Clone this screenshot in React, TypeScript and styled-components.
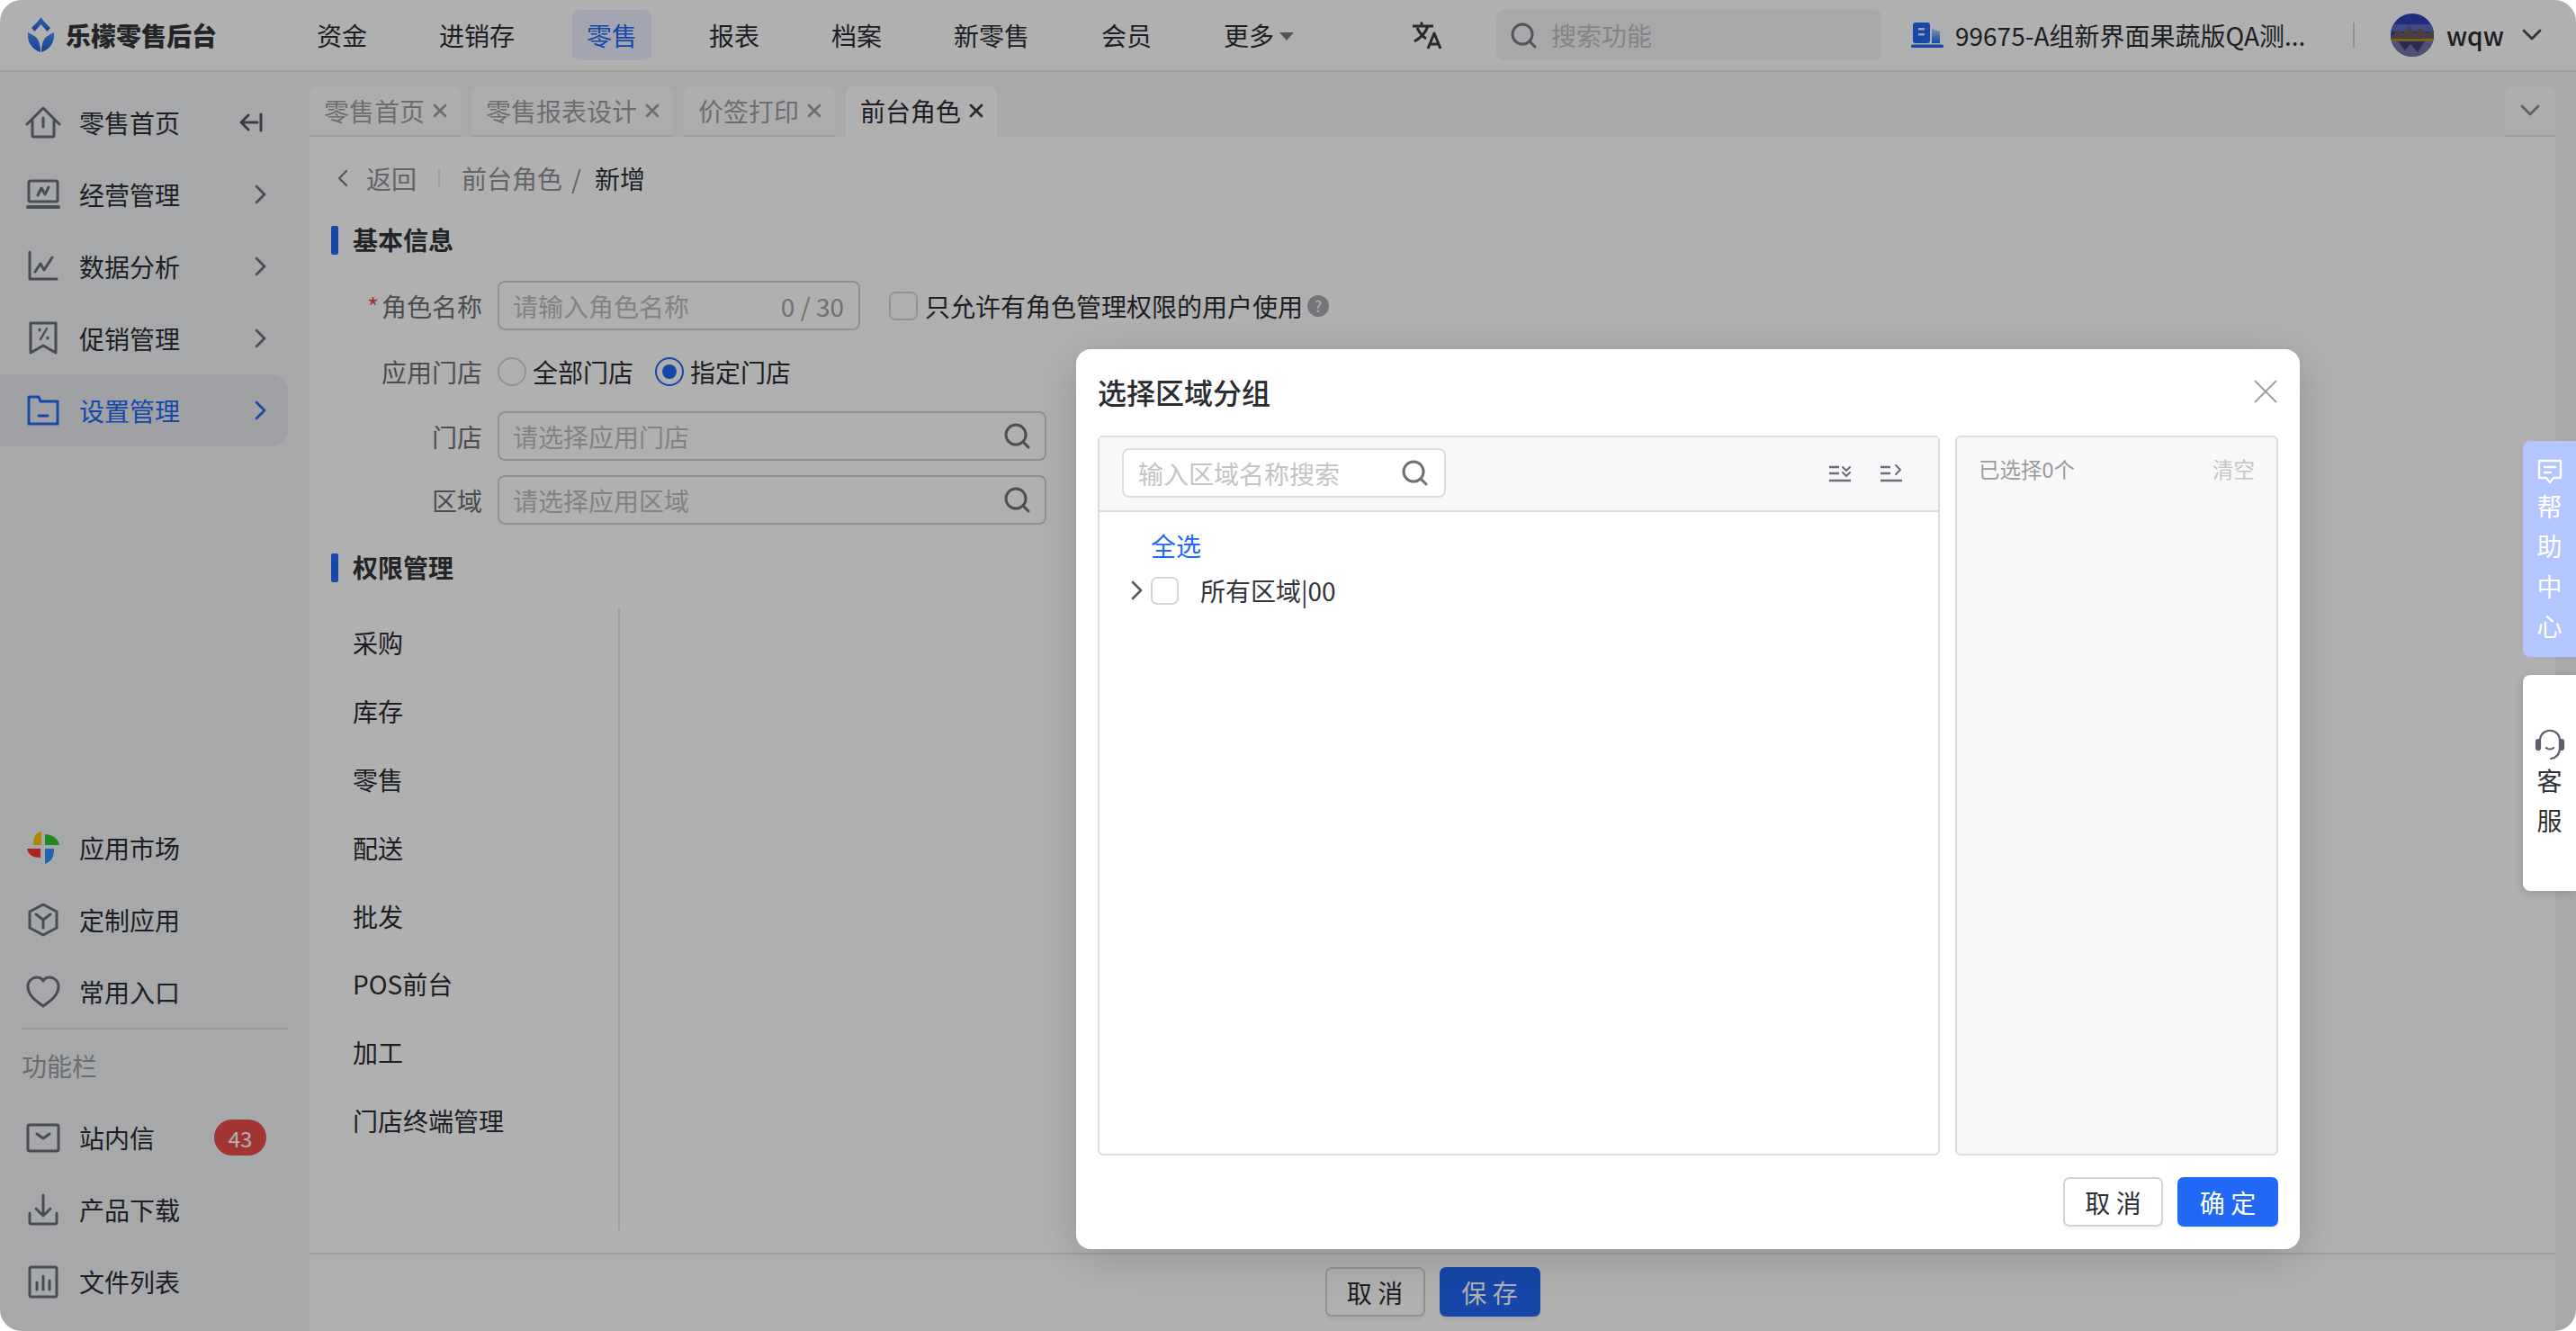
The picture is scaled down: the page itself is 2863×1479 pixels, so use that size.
import React from "react";
import styled, { createGlobalStyle } from "styled-components";

const BLUE = "#2068f5";
const INK = "#2b2e35";
const ICON = "#6b6e78";
const LINE = "#dcdcdc";

const GlobalStyle = createGlobalStyle`
  html, body {
    margin: 0;
    height: 100%;
    background: #fff;
    font-family: "Noto Sans CJK SC", "Noto Sans", sans-serif;
    color: ${INK};
  }
  #root { height: 100%; }
  * { box-sizing: border-box; }
`;

const Page = styled.div`
  position: relative;
  height: 100vh;
  overflow: hidden;
  border-radius: 24px;
  background: #f2f3f5;
  display: flex;
  flex-direction: column;
  font-size: 28px;
`;

const Header = styled.header`
  height: 80px;
  flex: none;
  display: flex;
  align-items: center;
  background: #fff;
  border-bottom: 2px solid #e6e6e6;
`;
const Brand = styled.div`
  width: 336px;
  flex: none;
  display: flex;
  align-items: center;
  gap: 12px;
  padding-left: 31px;
  font-weight: 900;
  color: #33353a;
`;
const Nav = styled.nav`
  width: 1232px;
  flex: none;
  display: flex;
  align-items: center;
  gap: 48px;
`;
const NavItem = styled.div<{ $active?: boolean }>`
  height: 56px;
  padding: 0 16px;
  display: flex;
  align-items: center;
  gap: 6px;
  border-radius: 8px;
  background: ${(p) => (p.$active ? "#ecf1ff" : "transparent")};
  color: ${(p) => (p.$active ? BLUE : INK)};
`;
const Caret = styled.span`
  width: 0;
  height: 0;
  border-left: 8px solid transparent;
  border-right: 8px solid transparent;
  border-top: 9px solid #7a7c82;
  margin-top: 2px;
`;
const TranslateBox = styled.div`
  width: 38px;
  flex: none;
  display: flex;
  margin-right: 57px;
`;
const GlobalSearch = styled.div`
  width: 428px;
  height: 56px;
  flex: none;
  display: flex;
  align-items: center;
  gap: 16px;
  padding-left: 16px;
  border-radius: 8px;
  background: #f2f3f5;
  color: #bfbfbf;
`;
const Store = styled.div`
  display: flex;
  align-items: center;
  gap: 13px;
  margin-left: 33px;
  white-space: nowrap;
  width: 469px;
  flex: none;
`;
const HeaderDivider = styled.div`
  width: 2px;
  height: 28px;
  background: #d0d0d0;
  margin: 0 40px 0 22px;
  flex: none;
`;
const Avatar = styled.div`
  width: 48px;
  height: 48px;
  flex: none;
  border-radius: 50%;
  overflow: hidden;
  display: flex;
`;
const UserName = styled.div`
  margin-left: 14px;
  margin-right: 20px;
  font-weight: 500;
`;

const Body = styled.div`
  flex: 1;
  min-height: 0;
  display: flex;
`;
const Sidebar = styled.aside`
  width: 344px;
  flex: none;
  display: flex;
  flex-direction: column;
  padding: 16px 0 15px;
`;
const SideGroup = styled.div`
  display: flex;
  flex-direction: column;
`;
const SideBottom = styled(SideGroup)`
  margin-top: auto;
`;
const SideItem = styled.div<{ $active?: boolean }>`
  width: 320px;
  height: 80px;
  flex: none;
  display: flex;
  align-items: center;
  padding: 0 24px 0 28px;
  border-radius: 0 20px 20px 0;
  background: ${(p) => (p.$active ? "#e7e9ef" : "transparent")};
  color: ${(p) => (p.$active ? BLUE : INK)};
`;
const SideIcon = styled.span`
  width: 40px;
  height: 40px;
  flex: none;
  display: flex;
  align-items: center;
  justify-content: center;
  margin-right: 20px;
`;
const SideRight = styled.span`
  margin-left: auto;
  display: flex;
  align-items: center;
`;
const Badge = styled.span`
  width: 58px;
  height: 40px;
  border-radius: 20px;
  background: #ec4e4e;
  color: #fff;
  font-size: 24px;
  display: flex;
  align-items: center;
  justify-content: center;
`;
const SideDivider = styled.div`
  width: 296px;
  height: 2px;
  margin-left: 24px;
  background: #e0e1e4;
`;
const SideCaption = styled.div`
  height: 80px;
  padding-left: 24px;
  display: flex;
  align-items: center;
  color: #9a9da3;
`;

const Main = styled.main`
  flex: 1;
  min-width: 0;
  display: flex;
  flex-direction: column;
`;
const TabBar = styled.div`
  height: 72px;
  flex: none;
  padding-top: 16px;
  display: flex;
  gap: 12px;
  justify-content: flex-start;
`;
const Tab = styled.div<{ $active?: boolean }>`
  height: 56px;
  padding: 0 15px 0 16px;
  display: flex;
  align-items: center;
  gap: 9px;
  border-radius: 8px 8px 0 0;
  background: ${(p) => (p.$active ? "#fff" : "#fbfbfb")};
  border-bottom: 2px solid ${(p) => (p.$active ? "#fff" : "#e6e6e6")};
  color: ${(p) => (p.$active ? INK : "#9b9ea4")};
`;
const TabExpand = styled(Tab)`
  margin-left: auto;
  width: 56px;
  padding: 0;
  justify-content: center;
`;
const Content = styled.div`
  flex: 1;
  min-height: 0;
  background: #fff;
  padding: 24px 24px 0;
`;
const BackRow = styled.div`
  height: 44px;
  display: flex;
  align-items: center;
  padding-left: 7px;
  color: #8f9298;
`;
const BackText = styled.span`
  margin-left: 20px;
`;
const BackDivider = styled.span`
  width: 2px;
  height: 20px;
  background: #e6e6e6;
  margin: 0 24px;
`;
const Crumb = styled.span<{ $gap: number }>`
  margin-right: ${(p) => p.$gap}px;
`;
const CrumbNow = styled.span`
  color: ${INK};
`;
const SectionTitle = styled.h3<{ $top: number }>`
  margin: ${(p) => p.$top}px 0 0;
  height: 32px;
  display: flex;
  align-items: flex-start;
  font-size: 28px;
  font-weight: 700;
  line-height: 30px;
  color: #33353a;
  &:before {
    content: "";
    width: 8px;
    height: 32px;
    margin-right: 16px;
    border-radius: 2px;
    background: ${BLUE};
  }
`;
const FormRow = styled.div<{ $top: number }>`
  margin-top: ${(p) => p.$top}px;
  display: flex;
  align-items: center;
  line-height: 32px;
`;
const FormLabel = styled.label`
  width: 168px;
  flex: none;
  margin-right: 17px;
  text-align: right;
  color: #6e7076;
  white-space: nowrap;
  em {
    color: #f04848;
    font-style: normal;
    margin-right: 3px;
  }
`;
const InputBox = styled.div<{ $width: number }>`
  width: ${(p) => p.$width}px;
  height: 55px;
  flex: none;
  display: flex;
  align-items: center;
  justify-content: space-between;
  padding: 0 16px 0 15px;
  border: 2px solid #d2d2d2;
  border-radius: 8px;
  background: #fff;
  color: #bdbdbd;
  white-space: nowrap;
`;
const Counter = styled.span`
  color: #a2a2a2;
`;
const CheckBox = styled.span<{ $size?: number }>`
  width: ${(p) => p.$size ?? 32}px;
  height: ${(p) => p.$size ?? 32}px;
  flex: none;
  border: 2px solid #d6d6d6;
  border-radius: 7px;
  background: #fff;
`;
const CheckLabel = styled.span`
  display: flex;
  align-items: center;
  gap: 8px;
  margin-left: 32px;
  white-space: nowrap;
`;
const HelpDot = styled.span`
  width: 24px;
  height: 24px;
  margin-left: -3px;
  border-radius: 50%;
  background: #a9acb2;
  color: #fff;
  font-size: 17px;
  display: flex;
  align-items: center;
  justify-content: center;
`;
const RadioLabel = styled.span`
  display: flex;
  align-items: center;
  gap: 7px;
  margin-right: 24px;
`;
const Radio = styled.span<{ $on?: boolean }>`
  width: 32px;
  height: 32px;
  flex: none;
  border-radius: 50%;
  border: 2px solid ${(p) => (p.$on ? BLUE : "#d2d2d2")};
  display: flex;
  align-items: center;
  justify-content: center;
  &:after {
    content: "";
    width: 16px;
    height: 16px;
    border-radius: 50%;
    background: ${(p) => (p.$on ? BLUE : "transparent")};
  }
`;
const PermLayout = styled.div`
  margin-top: 29px;
  height: 691px;
  width: 321px;
  border-right: 2px solid #e6e6e6;
`;
const PermItem = styled.div`
  height: 75.9px;
  padding-left: 24px;
  display: flex;
  align-items: center;
  white-space: nowrap;
`;
const FormFooter = styled.footer`
  height: 87px;
  flex: none;
  background: #fff;
  border-top: 2px solid #e6e6e6;
  padding-top: 14px;
  display: flex;
  justify-content: center;
  gap: 16px;
`;
const Button = styled.button<{ $primary?: boolean }>`
  width: ${(p) => (p.$primary ? 112 : 111)}px;
  height: 55px;
  padding: 0;
  border-radius: 7px;
  border: 2px solid ${(p) => (p.$primary ? BLUE : "#d2d2d2")};
  background: ${(p) => (p.$primary ? BLUE : "#fff")};
  color: ${(p) => (p.$primary ? "#fff" : INK)};
  font: inherit;
  box-shadow: 0 4px 0 rgba(0, 0, 0, 0.03);
`;
const Rail = styled.div`
  width: 23px;
  flex: none;
`;

const Overlay = styled.div`
  position: absolute;
  inset: 0;
  background: rgba(0, 0, 0, 0.31);
`;
const Modal = styled.section`
  position: absolute;
  left: 1196px;
  top: 388px;
  width: 1360px;
  height: 1000px;
  padding: 0 24px;
  display: flex;
  flex-direction: column;
  border-radius: 16px;
  background: #fff;
  box-shadow: 0 10px 50px rgba(0, 0, 0, 0.16);
`;
const ModalHead = styled.div`
  height: 96px;
  flex: none;
  display: flex;
  align-items: center;
  justify-content: space-between;
  padding-bottom: 2px;
  font-size: 32px;
  font-weight: 500;
  color: #2a2c31;
`;
const ModalPanels = styled.div`
  height: 800px;
  flex: none;
  display: flex;
  gap: 17px;
`;
const TreePanel = styled.div`
  width: 936px;
  flex: none;
  display: flex;
  flex-direction: column;
  border: 2px solid ${LINE};
  border-radius: 6px;
`;
const TreeHead = styled.div`
  height: 83px;
  flex: none;
  display: flex;
  align-items: center;
  justify-content: space-between;
  padding: 0 39px 2px 25px;
  background: #f8f8fa;
  border-bottom: 2px solid ${LINE};
`;
const TreeSearch = styled.div`
  width: 360px;
  height: 55px;
  display: flex;
  align-items: center;
  justify-content: space-between;
  padding: 0 18px 0 16px;
  border: 2px solid ${LINE};
  border-radius: 8px;
  background: #fff;
  color: #c4c4c4;
  white-space: nowrap;
`;
const TreeTools = styled.div`
  display: flex;
  gap: 31px;
`;
const TreeBody = styled.div`
  padding-top: 11px;
`;
const SelectAll = styled.div`
  height: 51px;
  padding-left: 57px;
  display: flex;
  align-items: center;
  color: ${BLUE};
`;
const TreeRow = styled.div`
  height: 50px;
  padding-left: 34px;
  display: flex;
  align-items: center;
  color: #33353a;
`;
const TreeCaret = styled.span`
  width: 23px;
  flex: none;
  display: flex;
`;
const TreeText = styled.span`
  margin-left: 24px;
`;
const PickedPanel = styled.div`
  width: 359px;
  flex: none;
  padding: 18px 24px;
  display: flex;
  justify-content: space-between;
  align-items: flex-start;
  border: 2px solid ${LINE};
  border-radius: 6px;
  background: #f8f8fa;
  color: #9b9b9b;
  font-size: 23.5px;
`;
const ClearLink = styled.span`
  color: #c4c4c4;
`;
const ModalFoot = styled.div`
  flex: 1;
  display: flex;
  justify-content: flex-end;
  gap: 16px;
  padding-top: 24px;
`;

const Floater = styled.div<{ $top: number; $light?: boolean }>`
  position: absolute;
  right: 0;
  top: ${(p) => p.$top}px;
  width: 59px;
  height: 240px;
  padding-top: ${(p) => (p.$light ? 20 : 59)}px;
  display: flex;
  flex-direction: column;
  align-items: center;
  border-radius: 8px 0 0 8px;
  background: ${(p) => (p.$light ? "#b3c6ff" : "#fff")};
  color: ${(p) => (p.$light ? "#fff" : "#2f3136")};
  box-shadow: ${(p) => (p.$light ? "none" : "-2px 2px 10px rgba(0, 0, 0, 0.14)")};
  line-height: 44.3px;
`;
const FloaterIcon = styled.span<{ $gap: number }>`
  display: flex;
  margin-bottom: ${(p) => p.$gap}px;
`;

const Line = ({ children, w = 40, h = 40, c = ICON, sw = 3 }: any) => (
  <svg
    width={w}
    height={h}
    viewBox={`0 0 ${w} ${h}`}
    fill="none"
    stroke={c}
    strokeWidth={sw}
    strokeLinecap="round"
    strokeLinejoin="round"
  >
    {children}
  </svg>
);

const Chevron = ({ c = "#6b6e78" }: any) => (
  <Line w={14} h={24} c={c} sw={2.6}>
    <path d="M3 3 L12 12 L3 21" />
  </Line>
);
const ChevronDown = ({ c = "#4a4c52", w = 22 }: any) => (
  <Line w={w} h={14} c={c} sw={2.8}>
    <path d={`M2 2 L${w / 2} 11 L${w - 2} 2`} />
  </Line>
);
const SearchIcon = ({ size = 29, c = "#6f7176" }: any) => (
  <Line w={size} h={size} c={c} sw={3}>
    <circle cx={size * 0.45} cy={size * 0.45} r={size * 0.38} />
    <path d={`M${size * 0.73} ${size * 0.73} L${size - 2} ${size - 2}`} />
  </Line>
);
const CloseMark = ({ c = "#9b9ea4" }: any) => (
  <Line w={16} h={16} c={c} sw={2.8}>
    <path d="M2 2 L14 14 M14 2 L2 14" />
  </Line>
);

const Logo = () => (
  <svg width="30" height="40" viewBox="0 0 30 40">
    <defs>
      <linearGradient id="lg" x1="0" y1="0" x2="0" y2="1">
        <stop offset="0" stopColor="#4a8cf5" />
        <stop offset="1" stopColor="#1f5fd8" />
      </linearGradient>
    </defs>
    <path d="M14.5 0 C16 3 21 8 25 12 L21.5 16 L14.5 8 L7.5 16 L4 12 C8 8 13 3 14.5 0Z" fill="url(#lg)" />
    <path d="M0 17 C3 19 9 21 11 25 C13 28 14 33 14 39 C6 36 -1 30 0 17Z" fill="url(#lg)" />
    <path d="M29 17 C26 19 20 21 18 25 C16 28 15 33 15 39 C23 36 30 30 29 17Z" fill="url(#lg)" />
  </svg>
);
const TranslateIcon = () => (
  <Line w={38} h={32} c="#3a3c42" sw={3}>
    <path d="M2 6 H25 M12 1.5 V6 M19 6 C17 12 11 19 4 23 M7 8 C10 14 14 18 17 20" strokeLinecap="butt" />
    <path d="M19 31 L26 14 L33 31 M21 26 H31" strokeLinecap="butt" />
  </Line>
);
const StoreIcon = () => (
  <svg width="36" height="28" viewBox="0 0 36 28">
    <defs>
      <linearGradient id="st" x1="0" y1="0" x2="0" y2="1">
        <stop offset="0" stopColor="#bcd2ff" />
        <stop offset="1" stopColor={BLUE} />
      </linearGradient>
    </defs>
    <rect x="2" y="0" width="19" height="23" rx="3" fill={BLUE} />
    <rect x="8" y="6" width="7" height="2.5" fill="#e6edff" />
    <rect x="8" y="12" width="7" height="2.5" fill="#e6edff" />
    <path d="M23 7 L32 10 V23 H23Z" fill="url(#st)" />
    <rect x="0" y="24.5" width="36" height="3.5" rx="1.5" fill={BLUE} />
  </svg>
);
const AvatarPic = () => (
  <svg width="48" height="48" viewBox="0 0 48 48">
    <rect width="48" height="48" fill="#2c3fb8" />
    <rect y="12" width="48" height="8" fill="#5a6cc0" />
    <path d="M0 27 L8 18 L14 22 L20 14 L27 22 L33 16 L40 22 L48 19 V30 H0Z" fill="#6d5a5c" />
    <path d="M0 28 H48 V31 H0Z" fill="#b08a3a" />
    <rect y="31" width="48" height="17" fill="#7274a8" />
    <path d="M8 31 L16 41 L22 34 L30 43 L38 31Z" fill="#3f4170" />
  </svg>
);

const HomeIcon = () => (
  <Line>
    <path d="M2 22 L20 4 L38 22" />
    <path d="M8 18 V34 a2 2 0 0 0 2 2 H30 a2 2 0 0 0 2-2 V18" />
    <path d="M20 15 V25" />
  </Line>
);
const BoardIcon = () => (
  <Line>
    <rect x="4" y="5" width="32" height="23" rx="2" />
    <path d="M14 21 L18 13 L22 20 L26 12" />
    <path d="M3 34 H37" strokeWidth={4} />
  </Line>
);
const TrendIcon = () => (
  <Line>
    <path d="M5 4 V34 H35" />
    <path d="M11 26 L17 17 L21 24 L30 10" />
  </Line>
);
const TicketIcon = () => (
  <Line>
    <path d="M6 3 H34 V36 L20 28 L6 36Z" />
    <path d="M24 9 L17 21" strokeWidth={2.4} />
    <path d="M16 10 V11 M25 19 V20" />
  </Line>
);
const FolderIcon = () => (
  <Line c={BLUE}>
    <path d="M4 5 H15 L17 10 H36 V35 H4Z" />
    <path d="M15 26 H25" />
  </Line>
);
const MarketIcon = () => (
  <svg width="36" height="36" viewBox="0 0 36 36">
    <path d="M16 0 C9 1 7 7 7 15 H16Z" fill="#ffc400" />
    <path d="M20 3 V15 H36 C35 8 28 3 20 3Z" fill="#2fc52f" />
    <path d="M0 19 C1 26 7 29 15 29 V19Z" fill="#ff3131" />
    <path d="M20 19 V36 C28 33 30 27 30 19Z" fill="#2e93ff" />
  </svg>
);
const CubeIcon = () => (
  <Line>
    <path d="M20 3 L35 11 V29 L20 37 L5 29 V11Z" />
    <path d="M12 14 L20 20 L28 14 M20 20 V29" />
  </Line>
);
const HeartIcon = () => (
  <Line>
    <path d="M20 36 C10 29 3 23 3 14 C3 8 8 4 13 4 C16 4 19 6 20 8 C21 6 24 4 27 4 C32 4 37 8 37 14 C37 23 30 29 20 36Z" />
  </Line>
);
const MailIcon = () => (
  <Line>
    <rect x="3" y="6" width="34" height="29" rx="2" />
    <path d="M13 16 L20 21 L27 16" />
  </Line>
);
const DownloadIcon = () => (
  <Line>
    <path d="M5 24 V34 a2 2 0 0 0 2 2 H33 a2 2 0 0 0 2-2 V24" />
    <path d="M20 4 V26 M12 19 L20 27 L28 19" />
  </Line>
);
const ChartIcon = () => (
  <Line>
    <rect x="5" y="4" width="30" height="33" rx="2" />
    <path d="M13 21 V29 M20 14 V29 M27 19 V29" />
  </Line>
);
const CollapseIcon = () => (
  <Line w={30} h={22} c="#55585f">
    <path d="M24 2 V20 M20 11 H3 M10 3 L2 11 L10 19" />
  </Line>
);
const BackChevron = () => (
  <Line w={12} h={20} c="#7c7f85" sw={2.4}>
    <path d="M10 2 L2 10 L10 18" />
  </Line>
);
const ExpandAll = () => (
  <Line w={26} h={22} c="#6b6e74" sw={2.6}>
    <path d="M1 4 H12 M1 11 H12 M1 19 H25" strokeLinecap="butt" />
    <path d="M16 4 L20 8 L24 4 M16 10 L20 14 L24 10" strokeWidth={2} />
  </Line>
);
const CollapseAll = () => (
  <Line w={26} h={22} c="#6b6e74" sw={2.6}>
    <path d="M1 4 H12 M1 11 H12 M1 19 H25" strokeLinecap="butt" />
    <path d="M18 2 L23 7 L18 12" strokeWidth={2} />
  </Line>
);
const ModalClose = () => (
  <Line w={28} h={28} c="#a0a0a0" sw={2}>
    <path d="M2 2 L26 26 M26 2 L2 26" strokeLinecap="butt" />
  </Line>
);
const ChatIcon = () => (
  <Line w={30} h={28} c="#fff" sw={2.4}>
    <path d="M3 2 H27 V21 H19 L15 26 L11 21 H3Z" />
    <path d="M9 9 H21 M9 15 H16" />
  </Line>
);
const HeadsetIcon = () => (
  <Line w={34} h={36} c="#5d6070" sw={2.2}>
    <path d="M6 14 C6 -1 28 -1 28 14 V22 C28 29 24 33 18 34" />
    <rect x="2" y="13" width="4" height="11" rx="2" fill="#5d6070" />
    <rect x="28" y="13" width="4" height="11" rx="2" fill="#5d6070" />
    <path d="M13 22 C15 24 19 24 21 22" />
  </Line>
);

const navItems = ["资金", "进销存", "零售", "报表", "档案", "新零售", "会员"];
const topMenu = [
  { label: "零售首页", icon: <HomeIcon />, right: <CollapseIcon /> },
  { label: "经营管理", icon: <BoardIcon />, right: <Chevron /> },
  { label: "数据分析", icon: <TrendIcon />, right: <Chevron /> },
  { label: "促销管理", icon: <TicketIcon />, right: <Chevron /> },
];
const permissions = ["采购", "库存", "零售", "配送", "批发", "POS前台", "加工", "门店终端管理"];

export default function App() {
  return (
    <Page>
      <GlobalStyle />
      <Header>
        <Brand>
          <Logo />
          乐檬零售后台
        </Brand>
        <Nav>
          {navItems.map((n) => (
            <NavItem key={n} $active={n === "零售"}>
              {n}
            </NavItem>
          ))}
          <NavItem>
            更多
            <Caret />
          </NavItem>
        </Nav>
        <TranslateBox>
          <TranslateIcon />
        </TranslateBox>
        <GlobalSearch>
          <SearchIcon c="#7a7c82" />
          搜索功能
        </GlobalSearch>
        <Store>
          <StoreIcon />
          99675-A组新界面果蔬版QA测...
        </Store>
        <HeaderDivider />
        <Avatar>
          <AvatarPic />
        </Avatar>
        <UserName>wqw</UserName>
        <ChevronDown />
      </Header>

      <Body>
        <Sidebar>
          <SideGroup>
            {topMenu.map((m) => (
              <SideItem key={m.label}>
                <SideIcon>{m.icon}</SideIcon>
                {m.label}
                <SideRight>{m.right}</SideRight>
              </SideItem>
            ))}
            <SideItem $active>
              <SideIcon>
                <FolderIcon />
              </SideIcon>
              设置管理
              <SideRight>
                <Chevron c={BLUE} />
              </SideRight>
            </SideItem>
          </SideGroup>
          <SideBottom>
            <SideItem>
              <SideIcon>
                <MarketIcon />
              </SideIcon>
              应用市场
            </SideItem>
            <SideItem>
              <SideIcon>
                <CubeIcon />
              </SideIcon>
              定制应用
            </SideItem>
            <SideItem>
              <SideIcon>
                <HeartIcon />
              </SideIcon>
              常用入口
            </SideItem>
            <SideDivider />
            <SideCaption>功能栏</SideCaption>
            <SideItem>
              <SideIcon>
                <MailIcon />
              </SideIcon>
              站内信
              <SideRight>
                <Badge>43</Badge>
              </SideRight>
            </SideItem>
            <SideItem>
              <SideIcon>
                <DownloadIcon />
              </SideIcon>
              产品下载
            </SideItem>
            <SideItem>
              <SideIcon>
                <ChartIcon />
              </SideIcon>
              文件列表
            </SideItem>
          </SideBottom>
        </Sidebar>

        <Main>
          <TabBar>
            <Tab>
              零售首页
              <CloseMark />
            </Tab>
            <Tab>
              零售报表设计
              <CloseMark />
            </Tab>
            <Tab>
              价签打印
              <CloseMark />
            </Tab>
            <Tab $active>
              前台角色
              <CloseMark c="#3a3c42" />
            </Tab>
            <TabExpand>
              <ChevronDown c="#8a8c92" />
            </TabExpand>
          </TabBar>
          <Content>
            <BackRow>
              <BackChevron />
              <BackText>返回</BackText>
              <BackDivider />
              <Crumb $gap={10}>前台角色</Crumb>
              <Crumb $gap={15}>/</Crumb>
              <CrumbNow>新增</CrumbNow>
            </BackRow>
            <SectionTitle $top={31}>基本信息</SectionTitle>
            <FormRow $top={29}>
              <FormLabel>
                <em>*</em>角色名称
              </FormLabel>
              <InputBox $width={403}>
                请输入角色名称
                <Counter>0 / 30</Counter>
              </InputBox>
              <CheckLabel>
                <CheckBox />
                只允许有角色管理权限的用户使用
                <HelpDot>?</HelpDot>
              </CheckLabel>
            </FormRow>
            <FormRow $top={30}>
              <FormLabel>应用门店</FormLabel>
              <RadioLabel>
                <Radio />
                全部门店
              </RadioLabel>
              <RadioLabel>
                <Radio $on />
                指定门店
              </RadioLabel>
            </FormRow>
            <FormRow $top={28}>
              <FormLabel>门店</FormLabel>
              <InputBox $width={610}>
                请选择应用门店
                <SearchIcon c="#6f7176" />
              </InputBox>
            </FormRow>
            <FormRow $top={16}>
              <FormLabel>区域</FormLabel>
              <InputBox $width={610}>
                请选择应用区域
                <SearchIcon c="#6f7176" />
              </InputBox>
            </FormRow>
            <SectionTitle $top={32}>权限管理</SectionTitle>
            <PermLayout>
              {permissions.map((p) => (
                <PermItem key={p}>{p}</PermItem>
              ))}
            </PermLayout>
          </Content>
          <FormFooter>
            <Button>取 消</Button>
            <Button $primary>保 存</Button>
          </FormFooter>
        </Main>
        <Rail />
      </Body>

      <Overlay />

      <Modal>
        <ModalHead>
          选择区域分组
          <ModalClose />
        </ModalHead>
        <ModalPanels>
          <TreePanel>
            <TreeHead>
              <TreeSearch>
                输入区域名称搜索
                <SearchIcon />
              </TreeSearch>
              <TreeTools>
                <ExpandAll />
                <CollapseAll />
              </TreeTools>
            </TreeHead>
            <TreeBody>
              <SelectAll>全选</SelectAll>
              <TreeRow>
                <TreeCaret>
                  <Chevron c="#55585f" />
                </TreeCaret>
                <CheckBox $size={31} />
                <TreeText>所有区域|00</TreeText>
              </TreeRow>
            </TreeBody>
          </TreePanel>
          <PickedPanel>
            已选择0个
            <ClearLink>清空</ClearLink>
          </PickedPanel>
        </ModalPanels>
        <ModalFoot>
          <Button>取 消</Button>
          <Button $primary>确 定</Button>
        </ModalFoot>
      </Modal>

      <Floater $top={490} $light>
        <FloaterIcon $gap={2}>
          <ChatIcon />
        </FloaterIcon>
        <span>帮</span>
        <span>助</span>
        <span>中</span>
        <span>心</span>
      </Floater>
      <Floater $top={750}>
        <FloaterIcon $gap={0}>
          <HeadsetIcon />
        </FloaterIcon>
        <span>客</span>
        <span>服</span>
      </Floater>
    </Page>
  );
}
